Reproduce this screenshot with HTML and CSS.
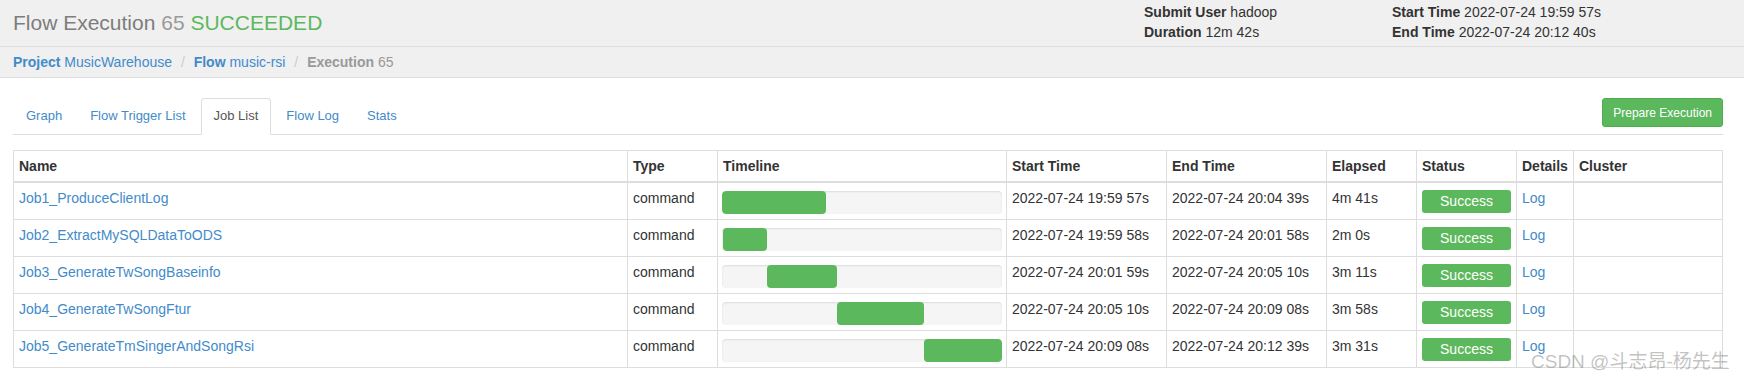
FILE: index.html
```html
<!DOCTYPE html>
<html lang="en">
<head>
    <meta charset="UTF-8">
    <meta name="viewport" content="width=device-width, initial-scale=1.0">
    <title>Flow Execution 65</title>
    <link rel="stylesheet" href="styles.css">
</head>
<body>
    <!-- Page header -->
    <div class="page-header">
        <h1 class="title">Flow Execution <span class="exec-id">65</span> <span class="status-ok">SUCCEEDED</span></h1>
        <div class="meta">
            <div><strong>Submit User</strong> hadoop</div>
            <div><strong>Duration</strong> 12m 42s</div>
        </div>
        <div class="meta">
            <div><strong>Start Time</strong> 2022-07-24 19:59 57s</div>
            <div><strong>End Time</strong> 2022-07-24 20:12 40s</div>
        </div>
    </div>

    <!-- Breadcrumb -->
    <ul class="breadcrumb">
        <li><a href="#"><strong>Project</strong> MusicWarehouse</a></li>
        <li><a href="#"><strong>Flow</strong> music-rsi</a></li>
        <li class="current"><strong>Execution</strong> 65</li>
    </ul>

    <div class="content">
        <!-- Tabs -->
        <div class="tab-bar">
            <ul class="tabs">
                <li><a href="#">Graph</a></li>
                <li><a href="#">Flow Trigger List</a></li>
                <li class="active"><a href="#">Job List</a></li>
                <li><a href="#">Flow Log</a></li>
                <li><a href="#">Stats</a></li>
            </ul>
            <button class="btn-prepare">Prepare Execution</button>
        </div>

        <!-- Job list -->
        <table class="jobs">
            <colgroup>
                <col>
                <col class="col-type">
                <col class="col-timeline">
                <col class="col-time">
                <col class="col-time">
                <col class="col-elapsed">
                <col class="col-status">
                <col class="col-details">
                <col class="col-cluster">
            </colgroup>
            <thead>
                <tr>
                    <th>Name</th>
                    <th>Type</th>
                    <th>Timeline</th>
                    <th>Start Time</th>
                    <th>End Time</th>
                    <th>Elapsed</th>
                    <th>Status</th>
                    <th>Details</th>
                    <th>Cluster</th>
                </tr>
            </thead>
            <tbody>
                <tr>
                    <td><a href="#">Job1_ProduceClientLog</a></td>
                    <td>command</td>
                    <td class="timeline"><div class="track"><div class="bar" style="margin-left: 0%; width: 37%;"></div></div></td>
                    <td>2022-07-24 19:59 57s</td>
                    <td>2022-07-24 20:04 39s</td>
                    <td>4m 41s</td>
                    <td><div class="label-success">Success</div></td>
                    <td><a href="#">Log</a></td>
                    <td></td>
                </tr>
                <tr>
                    <td><a href="#">Job2_ExtractMySQLDataToODS</a></td>
                    <td>command</td>
                    <td class="timeline"><div class="track"><div class="bar" style="margin-left: 0.2%; width: 15.7%;"></div></div></td>
                    <td>2022-07-24 19:59 58s</td>
                    <td>2022-07-24 20:01 58s</td>
                    <td>2m 0s</td>
                    <td><div class="label-success">Success</div></td>
                    <td><a href="#">Log</a></td>
                    <td></td>
                </tr>
                <tr>
                    <td><a href="#">Job3_GenerateTwSongBaseinfo</a></td>
                    <td>command</td>
                    <td class="timeline"><div class="track"><div class="bar" style="margin-left: 16%; width: 25%;"></div></div></td>
                    <td>2022-07-24 20:01 59s</td>
                    <td>2022-07-24 20:05 10s</td>
                    <td>3m 11s</td>
                    <td><div class="label-success">Success</div></td>
                    <td><a href="#">Log</a></td>
                    <td></td>
                </tr>
                <tr>
                    <td><a href="#">Job4_GenerateTwSongFtur</a></td>
                    <td>command</td>
                    <td class="timeline"><div class="track"><div class="bar" style="margin-left: 41%; width: 31.2%;"></div></div></td>
                    <td>2022-07-24 20:05 10s</td>
                    <td>2022-07-24 20:09 08s</td>
                    <td>3m 58s</td>
                    <td><div class="label-success">Success</div></td>
                    <td><a href="#">Log</a></td>
                    <td></td>
                </tr>
                <tr>
                    <td><a href="#">Job5_GenerateTmSingerAndSongRsi</a></td>
                    <td>command</td>
                    <td class="timeline"><div class="track"><div class="bar" style="margin-left: 72.2%; width: 27.8%;"></div></div></td>
                    <td>2022-07-24 20:09 08s</td>
                    <td>2022-07-24 20:12 39s</td>
                    <td>3m 31s</td>
                    <td><div class="label-success">Success</div></td>
                    <td><a href="#">Log</a></td>
                    <td></td>
                </tr>
            </tbody>
        </table>
    </div>

    <div class="watermark">CSDN @斗志昂-杨先生</div>
</body>
</html>
```

FILE: styles.css
```css
body {
    margin: 0;
    font-family: "Liberation Sans", "Noto Sans CJK SC", sans-serif;
    font-size: 14px;
    line-height: 20px;
    color: #333;
    background-color: #fff;
}

a {
    color: #428bca;
    text-decoration: none;
}

/* header */
.page-header {
    display: flex;
    height: 46px;
    padding: 0 13px;
    background-color: #f0f0f0;
    border-bottom: 1px solid #ddd;
}

.title {
    flex: 0 0 1131px;
    align-self: center;
    margin: 0;
    font-size: 21px;
    font-weight: normal;
    line-height: 26px;
    color: #7d7d7d;
}

.exec-id {
    color: #9a9a9a;
}

.status-ok {
    color: #5cb85c;
}

.meta {
    flex: 0 0 248px;
    padding-top: 2px;
}

/* breadcrumb */
.breadcrumb {
    margin: 0;
    padding: 5px 13px;
    list-style: none;
    font-size: 14px;
    background-color: #f0f0f0;
    border-bottom: 1px solid #ddd;
}

.breadcrumb li {
    display: inline-block;
}

.breadcrumb li + li::before {
    content: "/\00a0";
    padding: 0 5px;
    color: #ccc;
}

.breadcrumb .current {
    color: #999;
}

/* tabs */
.content {
    width: 1710px;
    padding: 20px 13px 0;
}

.tab-bar {
    display: flex;
    justify-content: space-between;
    align-items: flex-start;
    border-bottom: 1px solid #ddd;
}

.tabs {
    display: flex;
    margin: 0 0 -1px;
    padding: 0;
    list-style: none;
}

.tabs li {
    margin-right: 2px;
}

.tabs a {
    display: block;
    padding: 8px 12px 9px;
    font-size: 13px;
    line-height: 18px;
    border: 1px solid transparent;
    border-radius: 4px 4px 0 0;
}

.tabs .active a {
    color: #555;
    background-color: #fff;
    border-color: #ddd #ddd transparent;
}

.btn-prepare {
    height: 29px;
    padding: 0 10px;
    font-family: inherit;
    font-size: 12px;
    color: #fff;
    background-color: #5cb85c;
    border: 1px solid #4cae4c;
    border-radius: 3px;
    cursor: pointer;
}

/* job table */
.jobs {
    width: 1710px;
    margin-top: 15px;
    table-layout: fixed;
    border-collapse: collapse;
    border: 1px solid #ddd;
}

.col-type { width: 90px; }
.col-timeline { width: 289px; }
.col-time { width: 160px; }
.col-elapsed { width: 90px; }
.col-status { width: 100px; }
.col-details { width: 57px; }
.col-cluster { width: 149px; }

.jobs th,
.jobs td {
    padding: 5px;
    text-align: left;
    vertical-align: top;
    border: 1px solid #ddd;
    white-space: nowrap;
}

.jobs th {
    border-bottom-width: 2px;
}

.jobs td.timeline {
    padding: 5px 4px;
}

.track {
    display: flex;
    height: 23px;
    margin-top: 3px;
    background-color: #f5f5f5;
    border-radius: 4px;
    box-shadow: inset 0 1px 2px rgba(0, 0, 0, 0.1);
    overflow: hidden;
}

.bar {
    height: 100%;
    background-color: #5cb85c;
    border-radius: 4px;
}

.label-success {
    height: 23px;
    margin: 2px 0 1px;
    line-height: 23px;
    text-align: center;
    color: #fff;
    background-color: #5cb85c;
    border-radius: 3px;
}

.watermark {
    position: absolute;
    left: 1531px;
    top: 350px;
    font-size: 19px;
    line-height: 24px;
    color: rgba(120, 120, 120, 0.45);
}
```
